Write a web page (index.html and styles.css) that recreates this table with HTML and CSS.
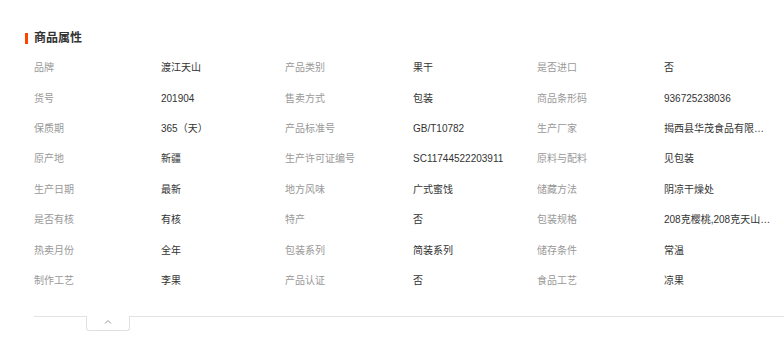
FILE: index.html
```html
<!DOCTYPE html>
<html lang="zh-CN">
<head>
<meta charset="utf-8">
<link rel="stylesheet" href="styles.css">
</head>
<body>
<div class="attrs">
  <h2 class="title"><span class="bar"></span>商品属性</h2>
  <div class="grid">
    <span class="k">品牌</span><span class="v">渡江天山</span>
    <span class="k">产品类别</span><span class="v">果干</span>
    <span class="k">是否进口</span><span class="v">否</span>

    <span class="k">货号</span><span class="v">201904</span>
    <span class="k">售卖方式</span><span class="v">包装</span>
    <span class="k">商品条形码</span><span class="v">936725238036</span>

    <span class="k">保质期</span><span class="v">365（天）</span>
    <span class="k">产品标准号</span><span class="v">GB/T10782</span>
    <span class="k">生产厂家</span><span class="v">揭西县华茂食品有限公司</span>

    <span class="k">原产地</span><span class="v">新疆</span>
    <span class="k">生产许可证编号</span><span class="v">SC11744522203911</span>
    <span class="k">原料与配料</span><span class="v">见包装</span>

    <span class="k">生产日期</span><span class="v">最新</span>
    <span class="k">地方风味</span><span class="v">广式蜜饯</span>
    <span class="k">储藏方法</span><span class="v">阴凉干燥处</span>

    <span class="k">是否有核</span><span class="v">有核</span>
    <span class="k">特产</span><span class="v">否</span>
    <span class="k">包装规格</span><span class="v">208克樱桃,208克天山红杏</span>

    <span class="k">热卖月份</span><span class="v">全年</span>
    <span class="k">包装系列</span><span class="v">简装系列</span>
    <span class="k">储存条件</span><span class="v">常温</span>

    <span class="k">制作工艺</span><span class="v">李果</span>
    <span class="k">产品认证</span><span class="v">否</span>
    <span class="k">食品工艺</span><span class="v">凉果</span>
  </div>
  <div class="divider">
    <button class="fold" type="button" aria-label="收起">
      <svg width="8" height="5" viewBox="0 0 8 5"><path d="M1 4.5 L4 1.5 L7 4.5" fill="none" stroke="#999" stroke-width="1"/></svg>
    </button>
  </div>
</div>
</body>
</html>
```
FILE: styles.css
```css
html, body {
  margin: 0;
  padding: 0;
  background: #fff;
}
body {
  font-family: "Liberation Sans", "Noto Sans CJK SC", sans-serif;
  width: 784px;
  overflow: hidden;
}
.attrs {
  padding: 30px 0 0 25px;
}
.title {
  display: flex;
  align-items: center;
  gap: 6px;
  margin: 0;
  height: 16px;
  font-size: 12px;
  font-weight: bold;
  color: #333;
  line-height: 16px;
}
.bar {
  width: 3px;
  height: 11px;
  background: #ff4400;
}
.grid {
  margin: 7px 0 0 9px;
  display: grid;
  grid-template-columns: 127px 124px 128px 124px 127px 1fr;
  grid-auto-rows: 30.43px;
  align-items: center;
  font-size: 10px;
  line-height: 14px;
}
.k {
  color: #999;
  white-space: nowrap;
}
.v {
  color: #333;
  white-space: nowrap;
  overflow: hidden;
  text-overflow: ellipsis;
  max-width: 107px;
}
.divider {
  margin: 20px 0 0 9px;
  border-top: 1px solid #e3e3e3;
  height: 20px;
}
.fold {
  display: flex;
  align-items: center;
  justify-content: center;
  margin: -1px 0 0 52px;
  width: 44px;
  height: 15px;
  padding: 0 0 3px;
  border: 1px solid #e0e0e0;
  border-top: none;
  border-radius: 0 0 3px 3px;
  background: #fff;
}
```
